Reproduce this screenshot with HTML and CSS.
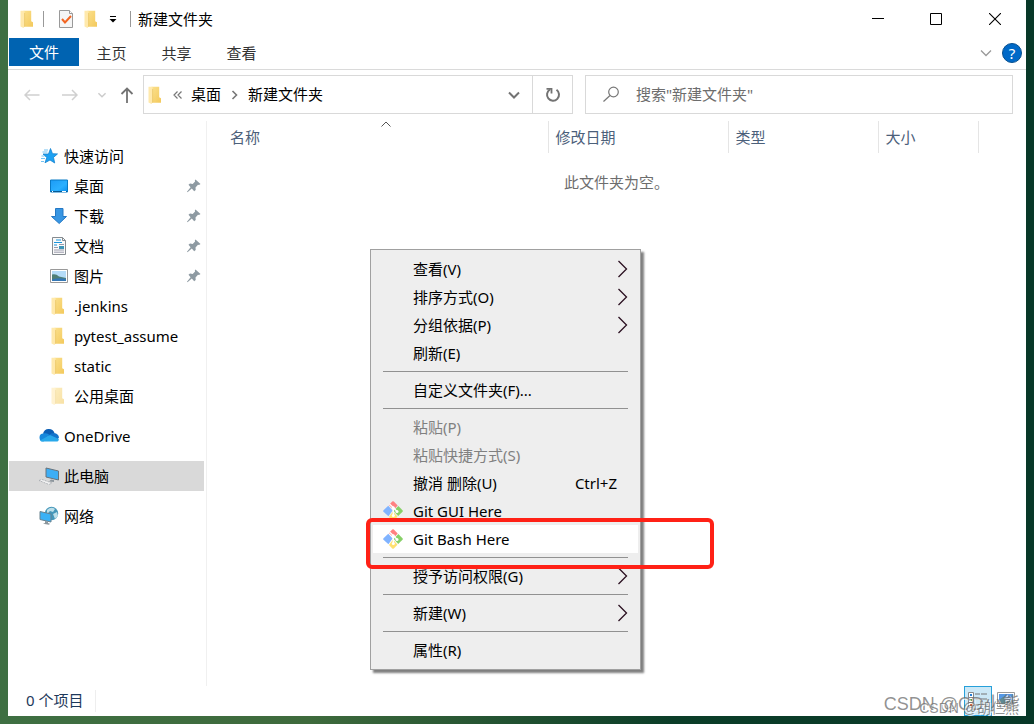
FILE: index.html
```html
<!DOCTYPE html>
<html lang="zh-CN">
<head>
<meta charset="utf-8">
<meta name="viewport" content="width=device-width, initial-scale=1">
<title>新建文件夹</title>
<link rel="stylesheet" href="styles.css">
</head>
<body>
<svg class="defs" aria-hidden="true">
  <defs>
    <linearGradient id="gold" x1="0" x2="1" y1="0" y2="1"><stop offset="0" stop-color="#fbe08c"/><stop offset="1" stop-color="#f3c95c"/></linearGradient>
    <linearGradient id="screen" x1="0" x2="1" y1="0" y2="1"><stop offset="0" stop-color="#1c9bf5"/><stop offset=".6" stop-color="#2bb0ff"/><stop offset="1" stop-color="#0a8ff0"/></linearGradient>
    <symbol id="folder" viewBox="0 0 20 20"><path d="M5.500 1.800h7.700v10.500l1.800.9v4.500H6z" fill="url(#gold)"/><path d="M2.500 1.800h4v2L6.300 17.800 5.500 19l-3-1.500z" fill="#ffe9ac"/><path d="M6.600 4v13.700" stroke="#eac466" stroke-width=".7"/></symbol>
    <symbol id="chev" viewBox="0 0 14 14"><path d="M2 4.500l5 5 5-5" fill="none" stroke="currentColor" stroke-width="var(--w,2)"/></symbol>
    <symbol id="pin" viewBox="0 0 16 16"><path d="M9.500 1.500l5 4.500-1.500 1-1-.2-2.500 2.700.2 2.500-1.500 1.200L5.800 10.600 1.500 14.200 1 13.800 4.600 9.200 2.500 6.800 4 5.600l2.700.3 2.400-2.500-.3-1.200z" fill="#8e9aa2"/></symbol>
    <symbol id="sub" viewBox="0 0 12 18"><path d="M1.500 1l8 8-8 8" fill="none" stroke="#2a1020" stroke-width="1.300"/></symbol>
    <symbol id="git" viewBox="0 0 20 20"><path d="M9.200.6q.8-.6 1.600 0l3.900 3.900-3.800 4.300L6 3.900z" fill="#ff8080"/><path d="M5.300 4.700l4.300 4.900-4.200 5.600L.5 10.800q-.6-.8 0-1.600z" fill="#80b3ff"/><path d="M15.300 5.100l4.200 4.100q.6.800 0 1.600l-4.300 4.300-4.500-5.200z" fill="#87d068"/><path d="M10 10.500l4.500 5.300-3.700 3.600q-.8.600-1.600 0L6 16z" fill="#ffe070"/><path d="M6.500 3l3.800 3.500V15M10.300 6.500l3.500 3.700" stroke="#fff" stroke-width="1.300" fill="none"/><circle cx="10.300" cy="6.800" r="1.500" fill="#fff"/><circle cx="14" cy="10.500" r="1.500" fill="#fff"/><circle cx="10.300" cy="14.500" r="1.500" fill="#fff"/></symbol>
  </defs>
</svg>
<div class="window">
  <header class="titlebar">
    <svg class="i20"><use href="#folder"/></svg>
    <span class="rule rule-first"></span>
    <button class="quick" aria-label="属性"><svg class="i20" viewBox="0 0 20 20"><path d="M3.500 1.500h10l3 3v14h-13z" fill="#f5f5f5" stroke="#999"/><path d="M13.500 1.500v3h3" fill="#fff" stroke="#999"/><path d="M6 10l3 3.500L15 7" fill="none" stroke="#f26522" stroke-width="2"/></svg></button>
    <button class="quick" aria-label="新建文件夹"><svg class="i20"><use href="#folder"/></svg></button>
    <button class="quick quick-more" aria-label="自定义快速访问工具栏"><svg width="8" height="8" viewBox="0 0 8 8"><path d="M1 1.500h6" stroke="#000"/><path d="M.5 4h7L4 7.500z"/></svg></button>
    <span class="rule"></span>
    <h1 class="title">新建文件夹</h1>
    <div class="caption">
      <button aria-label="最小化"><svg width="12" height="12"><path d="M0 5.500h12" stroke="#000"/></svg></button>
      <button aria-label="最大化"><svg width="12" height="12"><path d="M.5.500h11v11H.5z" fill="none" stroke="#000"/></svg></button>
      <button aria-label="关闭"><svg width="12" height="12"><path d="M0 0l12 12M12 0L0 12" stroke="#000" stroke-width="1.100"/></svg></button>
    </div>
  </header>
  <nav class="ribbon">
    <button class="tab tab-file">文件</button><button class="tab">主页</button><button class="tab">共享</button><button class="tab">查看</button>
    <button class="expand" aria-label="展开功能区"><svg class="i14 thin"><use href="#chev"/></svg></button>
    <button class="help" aria-label="帮助">?</button>
  </nav>
  <div class="address-row">
    <div class="history">
      <button aria-label="后退"><svg width="16" height="14" viewBox="0 0 16 14"><path d="M1 7h14.500M6 2L1 7l5 5" fill="none" stroke="#d0d0d0" stroke-width="1.500"/></svg></button>
      <button aria-label="前进"><svg width="16" height="14" viewBox="0 0 16 14"><path d="M0 7h15M10 2l5 5-5 5" fill="none" stroke="#d0d0d0" stroke-width="1.500"/></svg></button>
      <button class="recent" aria-label="最近位置"><svg width="10" height="10" class="pale"><use href="#chev"/></svg></button>
      <button aria-label="上移"><svg width="14" height="16" viewBox="0 0 14 16"><path d="M7 16V1.500M1.500 7L7 1.500 12.500 7" fill="none" stroke="#737373" stroke-width="1.800"/></svg></button>
    </div>
    <div class="address">
      <svg class="i20"><use href="#folder"/></svg>
      <span class="back-mark"><svg width="10" height="8" viewBox="0 0 10 8"><path d="M4.500.5L1 4l3.500 3.500M8.500.5L5 4l3.500 3.500" fill="none" stroke="#777" stroke-width="1.200"/></svg></span>
      <button class="crumb">桌面</button>
      <svg class="crumb-sep" width="8" height="10" viewBox="0 0 8 10"><path d="M1.500 1l4 4-4 4" fill="none" stroke="#777" stroke-width="1.600"/></svg>
      <button class="crumb">新建文件夹</button>
      <button class="drop" aria-label="以前的位置"><svg class="i14 dark"><use href="#chev"/></svg></button>
      <button class="refresh" aria-label="刷新"><svg width="16" height="16" viewBox="0 0 16 16"><path d="M11.500 2.800A6 6 0 1 1 5 2.500" fill="none" stroke="#737373" stroke-width="2"/><path d="M1.500 1.800h5v4.700" fill="none" stroke="#737373" stroke-width="1.800"/></svg></button>
    </div>
    <label class="search"><svg width="17" height="17" viewBox="0 0 17 17"><circle cx="10.500" cy="6" r="4.800" fill="none" stroke="#777" stroke-width="1.200"/><path d="M7 9.500l-6.500 6" stroke="#777" stroke-width="1.200"/></svg><input type="search" placeholder='搜索"新建文件夹"' aria-label="搜索"></label>
  </div>
  <div class="body">
    <nav class="tree">
      <a class="node root" href="#"><svg class="i20" viewBox="0 0 20 20"><path d="M11.500 2.500l2 5.200 5 .2-4 3.500 1.200 5.600-4.700-3-5 2.800 1.800-5.300L4 8h5.500z" fill="#1da1f2" stroke="#1583cf" stroke-width=".8"/><path d="M5 4h4M3.500 6h5M2.500 10h3M2 12.500h4M2 15.500h3" stroke="#72c3f3" stroke-width="1"/></svg>快速访问</a>
      <a class="node" href="#"><svg class="i20" viewBox="0 0 20 20"><path d="M1.500 4h17v12h-17z" fill="url(#screen)" stroke="#087ac5"/><path d="M2 15.500h16" stroke="#075a94"/><path d="M3 15.500h1M13 15.500h4" stroke="#fff"/></svg>桌面<svg class="pin"><use href="#pin"/></svg></a>
      <a class="node" href="#"><svg class="i20" viewBox="0 0 20 20"><path d="M6.500 2.500h7.500v8h3.500L10.200 17.500 2.500 10.500h4z" fill="#3896e3" stroke="#2478c4"/></svg>下载<svg class="pin"><use href="#pin"/></svg></a>
      <a class="node" href="#"><svg class="i20" viewBox="0 0 20 20"><path d="M3.500 1.500h10l3 3v14h-13z" fill="#fafafa" stroke="#858b90"/><path d="M13.500 1.500v3h3" fill="none" stroke="#858b90"/><path d="M7 4h5M5 6.500h8M5 9h3" stroke="#1994db" stroke-width="1.200"/><path d="M10 8.500h5M5 11.500h4M5 14h10M5 16.200h10" stroke="#99a"/><path d="M10 10h5v3h-5z" fill="#3d95b7"/></svg>文档<svg class="pin"><use href="#pin"/></svg></a>
      <a class="node" href="#"><svg class="i20" viewBox="0 0 20 20"><path d="M1.500 3.500h17v13h-17z" fill="#fff" stroke="#999"/><path d="M3 5h14v10H3z" fill="#b5dcf8"/><path d="M3 8.500q4-1 7 2l7 1.500v3H3z" fill="#507f76"/><path d="M3 13.500q7-2 14-.5v2H3z" fill="#3477b5"/></svg>图片<svg class="pin"><use href="#pin"/></svg></a>
      <a class="node" href="#"><svg class="i20"><use href="#folder"/></svg>.jenkins</a>
      <a class="node" href="#"><svg class="i20"><use href="#folder"/></svg>pytest_assume</a>
      <a class="node" href="#"><svg class="i20"><use href="#folder"/></svg>static</a>
      <a class="node" href="#"><svg class="i20 faded"><use href="#folder"/></svg>公用桌面</a>
      <a class="node root spaced" href="#"><svg class="i20" viewBox="0 0 20 20"><path d="M4 7.500A6 6 0 0 1 15.500 7l-3 5z" fill="#0a5eb5"/><path d="M4.500 7.500q4-.8 6 1.500l-6 6.500A4 4 0 0 1 4.500 7.500z" fill="#1688dc"/><path d="M15 7q4.500.5 5 4.500L18 14l-8-5q2-2 5-2z" fill="#1374cb"/><path d="M1 14.400L11 9l8.800 4a2.600 2.600 0 0 1-2.800 2.600H4q-2 0-3-1.200z" fill="#28a8ea"/></svg>OneDrive</a>
      <a class="node root spaced selected" href="#" aria-current="page"><svg class="i20" viewBox="0 0 20 20"><path d="M7 2l12.500 3v9L7 11z" fill="#3daef5" stroke="#68727a"/><path d="M12 13.500l-2 2 5 .5v-2z" fill="#8d969d"/><path d="M0 14.500l3-1 10 3.500-3 1.500z" fill="#f4f4f4" stroke="#a3a8ad" stroke-width=".8" stroke-dasharray="2 1"/></svg>此电脑</a>
      <a class="node root spaced" href="#"><svg class="i20" viewBox="0 0 20 20"><circle cx="12.500" cy="7.500" r="6.700" fill="#4596b9"/><path d="M8 4q4-4 8-1l-2 3-3-1-3 3zM14 8l4-2 1 4-3 3z" fill="#bddfe9"/><path d="M1 5.500l11 2.500v8L1 13.500z" fill="#39b1f6" stroke="#68828f"/><path d="M6 15v2l-2 .7 6 1 1-1-2-.7v-1.500z" fill="#8b969c"/></svg>网络</a>
    </nav>
    <main class="content">
      <table class="files">
        <colgroup><col><col class="c-date"><col class="c-type"><col class="c-size"><col class="c-end"></colgroup>
        <thead><tr><th class="name">名称<svg class="sort" width="10" height="6" viewBox="0 0 10 6"><path d="M.5 5.500L5 1l4.500 4.500" fill="none" stroke="#555"/></svg></th><th>修改日期</th><th>类型</th><th>大小</th><td></td></tr></thead>
      </table>
      <p class="empty">此文件夹为空。</p>
    </main>
  </div>
  <footer class="status"><span class="count">0 个项目</span>
    <div class="views">
      <button class="view active" aria-label="详细信息"><svg width="20" height="20" viewBox="0 0 20 20"><path d="M.5 1.500h5v5h-5zM.5 6.500h5v5h-5zM.5 11.500h5v5h-5z" fill="#fff" stroke="#888"/><path d="M2 4h2" stroke="#247fd3" stroke-width="2"/><path d="M2 9h2" stroke="#4b9c68" stroke-width="2"/><path d="M2 14h2" stroke="#d4572e" stroke-width="2"/><path d="M7 3h5M13 3h6M7 8h5M13 8h6M7 14h5M13 14h6" stroke="#777"/></svg></button>
      <button class="view" aria-label="大图标"><svg width="20" height="20" viewBox="0 0 20 20"><path d="M1.500 1.500h17v14h-17z" fill="#fff" stroke="#999"/><path d="M3 3h14v11H3z" fill="#5598e6"/><path d="M3 9l4-3 4 4 6-1v5H3z" fill="#5f8a96"/></svg></button>
    </div>
  </footer>
</div>
<div class="menu" role="menu">
  <button role="menuitem">查看(V)<svg class="sub"><use href="#sub"/></svg></button>
  <button role="menuitem">排序方式(O)<svg class="sub"><use href="#sub"/></svg></button>
  <button role="menuitem">分组依据(P)<svg class="sub"><use href="#sub"/></svg></button>
  <button role="menuitem">刷新(E)</button>
  <hr>
  <button role="menuitem">自定义文件夹(F)...</button>
  <hr>
  <button role="menuitem" disabled>粘贴(P)</button>
  <button role="menuitem" disabled>粘贴快捷方式(S)</button>
  <button role="menuitem">撤消 删除(U)<kbd>Ctrl+Z</kbd></button>
  <button role="menuitem" class="with-icon"><svg class="i20"><use href="#git"/></svg>Git GUI Here</button>
  <button role="menuitem" class="with-icon hot"><svg class="i20"><use href="#git"/></svg>Git Bash Here</button>
  <hr>
  <button role="menuitem">授予访问权限(G)<svg class="sub"><use href="#sub"/></svg></button>
  <hr>
  <button role="menuitem">新建(W)<svg class="sub"><use href="#sub"/></svg></button>
  <hr>
  <button role="menuitem">属性(R)</button>
  <div class="highlight"></div>
</div>
<div class="mark mark-large">CSDN @CD小熊</div>
<div class="mark mark-small">CSDN @胡仨熊</div>
</body>
</html>
```

FILE: styles.css
```css
* { box-sizing: border-box; }
body {
  margin: 0;
  min-height: 100vh;
  padding: 0 8px 8px;
  display: flex;
  position: relative;
  overflow: hidden;
  background: linear-gradient(90deg, #3e6f42 0, #3e6a3c 30%, #0b3d28 65%, #083828);
  font: 15px/20px "Noto Sans", "Noto Sans CJK SC", sans-serif;
  color: #000;
}
button { font: inherit; color: inherit; border: 0; background: none; padding: 0; }
a { color: inherit; text-decoration: none; }
svg { display: block; flex: none; }
.defs { position: absolute; width: 0; height: 0; }
.i20 { width: 20px; height: 20px; }
.i14 { width: 14px; height: 14px; }
.thin { --w: 1.3; color: #999; }
.pale { color: #ccc; }
.dark { color: #737373; }
.window { flex: 1; min-width: 0; display: flex; flex-direction: column; background: #fff; }

.titlebar { height: 38px; display: flex; align-items: center; padding-left: 10px; }
.rule { width: 1px; height: 16px; background: #999; margin-right: 7px; }
.rule-first { margin: 0 12px 0 5px; }
.quick { margin-right: 6px; }
.quick-more { margin: 0 13px 0 1px; }
.title { margin: 0; font-size: 15px; font-weight: 400; }
.caption { margin-left: auto; margin-right: 1px; display: flex; }
.caption button { width: 58px; height: 38px; display: grid; place-items: center; }
.caption button:last-child { width: 60px; }

.ribbon { height: 32px; display: flex; align-items: flex-start; padding-left: 1px; border-bottom: 1px solid #dadada; }
.tab { width: 65px; height: 29px; color: #333; }
.tab-file { width: 70px; height: 28px; background: #0063b1; color: #fff; }
.expand { margin: 8px 9px 0 auto; }
.help { width: 20px; height: 20px; margin: 5px 4px 0 0; border: 1px solid #07508f; border-radius: 50%; background: #0069c7; color: #fff; line-height: 18px; }

.address-row { display: flex; padding: 5px 13px 0 16px; }
.history { width: 119px; flex: none; display: flex; align-items: center; gap: 22px; }
.history .recent { margin: 0 -9px 0 -3px; }
.address { flex: 1 1 430px; min-width: 0; height: 39px; display: flex; align-items: center; border: 1px solid #d9d9d9; padding-left: 2px; white-space: nowrap; }
.address .crumb { padding-bottom: 2px; }
.back-mark { margin: 0 8px 0 7px; }
.crumb-sep { margin: 0 9px 0 10px; }
.drop { margin-left: auto; width: 36px; height: 37px; display: grid; place-items: center; }
.refresh { width: 40px; height: 37px; display: grid; place-items: center; border-left: 1px solid #d9d9d9; }
.search { flex: 1 1 428px; min-width: 0; margin-left: 12px; display: flex; align-items: center; gap: 16px; padding-left: 17px; border: 1px solid #d9d9d9; }
.search input { flex: 1; min-width: 0; border: 0; outline: 0; padding: 0 0 2px; font: inherit; background: none; }
.search input::placeholder { color: #6d6d6d; opacity: 1; }

.body { flex: 1; display: flex; padding-top: 7px; }
.tree { width: 199px; border-right: 1px solid #f0f0f0; padding: 20px 2px 0 1px; }
.node { height: 30px; display: flex; align-items: center; gap: 5px; padding-left: 40px; }
.node.root { padding-left: 30px; }
.spaced { margin-top: 10px; }
.selected { background: #d9d9d9; }
.pin { width: 16px; height: 16px; margin-left: auto; margin-right: 2px; }
.faded { opacity: .55; }
.content { flex: 1; min-width: 0; }
.files { width: 100%; table-layout: fixed; border-collapse: collapse; }
.c-date { width: 180px; }
.c-type { width: 150px; }
.c-size { width: 100px; }
.c-end { width: 48px; }
.files th { height: 32px; padding: 0 7px 1px; text-align: left; font-weight: 400; color: #4c607a; border-right: 1px solid #e5e5e5; }
.files .name { padding-left: 23px; position: relative; }
.sort { position: absolute; left: 174px; top: 0; }
.empty { margin: 19px 0 0; text-align: center; color: #6d6d6d; }
.status { height: 30px; display: flex; align-items: center; padding-left: 18px; color: #1e395b; }
.count { padding: 0 12px 2px 0; border-right: 1px solid #eee; }
.views { margin-left: auto; margin-right: 6px; display: flex; }
.view { width: 28px; height: 30px; display: grid; place-items: center; }
.active { background: #cce8f6; border: 1px solid #26a0da; }

.menu { position: absolute; left: 370px; top: 249px; width: 271px; padding: 5px 2px; background: #eee; border: 1px solid #a0a0a0; box-shadow: 3px 3px 2px rgba(0, 0, 0, .5); }
.menu button { width: 100%; height: 28px; display: flex; align-items: center; padding: 0 9px 0 40px; text-align: left; }
.menu button:disabled { color: #808080; }
.menu .with-icon { gap: 10px; padding-left: 10px; }
.menu .hot { background: #fff; }
.menu hr { height: 1px; margin: 4px 10px; border: 0; background: #919191; }
.menu kbd { margin-left: auto; margin-right: 12px; font: inherit; }
.sub { width: 12px; height: 18px; margin-left: auto; }
.highlight { position: absolute; left: -5px; top: 268px; width: 348px; height: 51px; border: 4px solid #ff2116; border-radius: 6px; }
.mark { position: absolute; white-space: nowrap; color: rgba(110, 110, 110, .75); text-shadow: 1px 1px 0 rgba(255, 255, 255, .8); font-family: "Liberation Sans", "Noto Sans CJK SC", sans-serif; }
.mark-large { right: 14px; bottom: 9px; font-size: 18px; line-height: 22px; }
.mark-small { right: 15px; bottom: 7px; font-size: 14px; line-height: 18px; }
```
